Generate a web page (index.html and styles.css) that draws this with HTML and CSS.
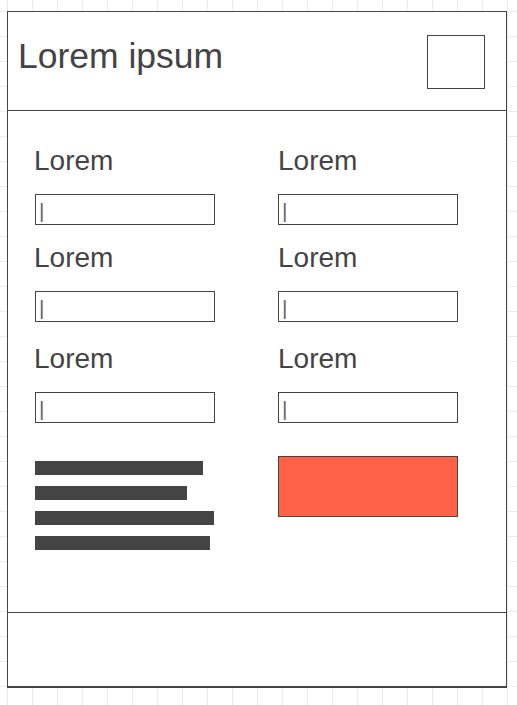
FILE: index.html
```html
<!DOCTYPE html>
<html lang="en">
<head>
<meta charset="utf-8">
<title>Form wireframe</title>
<link rel="stylesheet" href="styles.css">
</head>
<body>
<div class="frame">
  <header class="header">
    <h1 class="title">Lorem ipsum</h1>
    <div class="square"></div>
  </header>
  <main class="main">
    <div class="field">
      <div class="label">Lorem</div>
      <div class="input">|</div>
    </div>
    <div class="field">
      <div class="label">Lorem</div>
      <div class="input">|</div>
    </div>
    <div class="field">
      <div class="label">Lorem</div>
      <div class="input">|</div>
    </div>
    <div class="field">
      <div class="label">Lorem</div>
      <div class="input">|</div>
    </div>
    <div class="field field-low">
      <div class="label">Lorem</div>
      <div class="input">|</div>
    </div>
    <div class="field field-low">
      <div class="label">Lorem</div>
      <div class="input">|</div>
    </div>
    <div class="bars">
      <div class="bar bar-1"></div>
      <div class="bar bar-2"></div>
      <div class="bar bar-3"></div>
      <div class="bar bar-4"></div>
    </div>
    <div class="button-cell">
      <div class="button"></div>
    </div>
  </main>
  <footer class="footer"></footer>
</div>
</body>
</html>
```
FILE: styles.css
```css
html, body {
  margin: 0;
  padding: 0;
}

body {
  width: 517px;
  height: 705px;
  overflow: hidden;
  background-color: #ffffff;
  background-image:
    linear-gradient(#ebebeb 1px, transparent 1px),
    linear-gradient(90deg, #ebebeb 1px, transparent 1px);
  background-size: 25px 25px;
  background-position: 7px 11px;
  font-family: "Liberation Sans", Arial, sans-serif;
  color: #444444;
}

.frame {
  margin: 11px 0 0 7px;
  width: 498px;
  border: 1px solid #444444;
  border-bottom-width: 2px;
  background: #ffffff;
  display: flex;
  flex-direction: column;
}

.header {
  height: 98px;
  border-bottom: 1px solid #444444;
  display: flex;
  justify-content: space-between;
  align-items: flex-start;
  padding: 0 21px 0 10px;
}

.title {
  margin: 24px 0 0 0;
  font-size: 35.5px;
  line-height: 40px;
  font-weight: normal;
  color: #444444;
}

.square {
  margin-top: 23px;
  width: 56px;
  height: 52px;
  border: 1px solid #444444;
}

.main {
  height: 501px;
  box-sizing: border-box;
  padding: 34px 0 0 27px;
  display: grid;
  grid-template-columns: 180px 180px;
  grid-auto-rows: min-content;
  column-gap: 63px;
  row-gap: 17px;
  align-content: start;
}

.field {
  display: flex;
  flex-direction: column;
  gap: 17px;
}

.field-low {
  margin-top: 4px;
}

.label {
  font-size: 28px;
  line-height: 32px;
  color: #444444;
}

.field:nth-child(odd) .label {
  margin-left: -1px;
}

.input {
  box-sizing: border-box;
  height: 31px;
  border: 1px solid #444444;
  padding: 1px 0 0 3px;
  font-size: 21px;
  line-height: 29px;
  color: #666666;
}

.bars {
  margin-top: 16px;
  padding-top: 5px;
  display: flex;
  flex-direction: column;
  gap: 11px;
}

.bar {
  height: 14px;
  background: #444444;
}

.bar-1 { width: 168px; }
.bar-2 { width: 152px; }
.bar-3 { width: 179px; }
.bar-4 { width: 175px; }

.button-cell {
  margin-top: 16px;
}

.button {
  box-sizing: border-box;
  width: 180px;
  height: 61px;
  border: 1px solid #444444;
  background: #ff6347;
}

.footer {
  height: 73px;
  border-top: 1px solid #444444;
}
```
